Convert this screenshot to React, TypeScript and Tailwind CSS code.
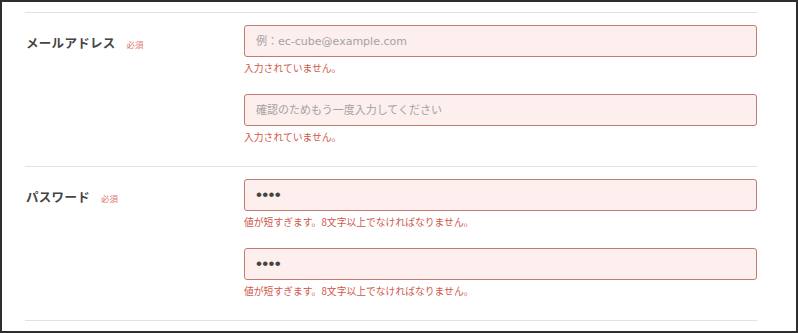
const FONT = { fontFamily: '"Noto Sans CJK JP", "Noto Sans", sans-serif' };
const INPUT_FONT = { fontFamily: '"DejaVu Sans", "Noto Sans CJK JP", sans-serif' };
const DOT_FONT = { fontFamily: '"Liberation Sans", sans-serif' };

const Required = () => (
  <span className="ml-[11px] text-[8.5px] font-normal tracking-normal text-[#e0756a]">必須</span>
);

const Field = ({ placeholder, value, error }: { placeholder?: string; value?: string; error: string }) => (
  <div>
    <input
      readOnly
      type={value ? 'password' : 'text'}
      value={value ?? ''}
      placeholder={placeholder}
      className={
        value
          ? 'block h-[32px] w-full rounded-[3px] border border-[#c27a72] bg-[#fdefee] px-[11px] text-[17px] tracking-[0.3px] text-[#444] outline-none'
          : 'block h-[32px] w-full rounded-[3px] border border-[#c27a72] bg-[#fdefee] px-[11px] text-[11px] text-[#444] placeholder:text-[#a3a3a3] outline-none'
      }
      style={value ? DOT_FONT : INPUT_FONT}
    />
    <p className="mt-[4px] text-[9.8px] leading-[14px] text-[#d0574c]">{error}</p>
  </div>
);

const Row = ({ label, children }: { label: string; children: React.ReactNode }) => (
  <div className="flex border-b border-[#e2e2e2] pt-[12px] pb-[22px]">
    <div className="w-[219px] shrink-0 pt-[4px] pl-px">
      <span className="text-[12.5px] leading-[18px] font-bold text-[#444] tracking-[0.3px]">{label}</span>
      <Required />
    </div>
    <div className="flex flex-1 flex-col gap-[19px]">{children}</div>
  </div>
);

export default function App() {
  return (
    <div className="h-[333px] w-[798px] border-2 border-[#2e2e2e] bg-white" style={FONT}>
      <div className="mt-[10px] ml-[23px] w-[732px] border-t border-[#e2e2e2]">
        <Row label="メールアドレス">
          <Field placeholder="例：ec-cube@example.com" error="入力されていません。" />
          <Field placeholder="確認のためもう一度入力してください" error="入力されていません。" />
        </Row>
        <Row label="パスワード">
          <Field value="abcd" error="値が短すぎます。8文字以上でなければなりません。" />
          <Field value="abcd" error="値が短すぎます。8文字以上でなければなりません。" />
        </Row>
      </div>
    </div>
  );
}
